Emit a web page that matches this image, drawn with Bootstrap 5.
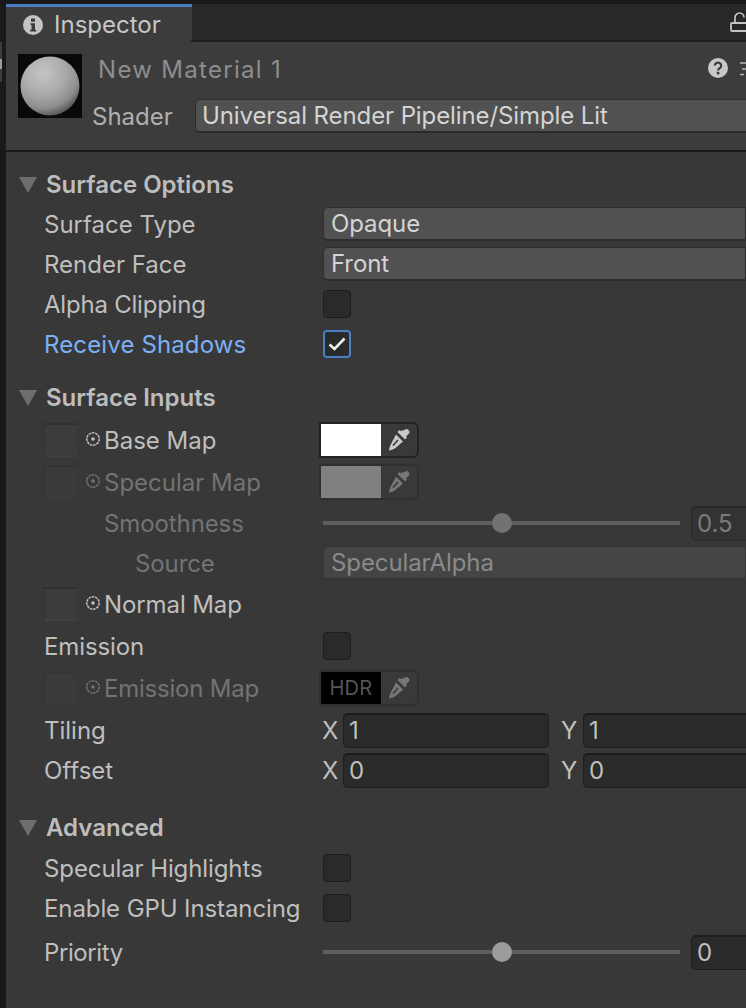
<!DOCTYPE html>
<html lang="en"><head><meta charset="utf-8"><title>Inspector</title>
<link href="https://cdn.jsdelivr.net/npm/bootstrap@5.3.0/dist/css/bootstrap.min.css" rel="stylesheet">
<style>
html,body{margin:0;height:1008px;overflow:hidden;background:#191919}
body{font-family:Inter,"Liberation Sans",sans-serif;font-size:24px;color:#bfbfbf;line-height:1}
.ins-shell{width:746px;height:1008px;padding:4px 0 0 6px;overflow:hidden;position:relative}
.ins-sliver{position:absolute;left:0;top:42px;width:2px;height:40px;background:#3c3c3c}
.ins-sliver i{position:absolute;left:0;top:17px;width:2px;height:10px;background:#a0a0a0}
.ins-tabbar{height:38px;background:#282828;border-bottom:2px solid #1f1f1f}
.ins-tab{width:186px;height:38px;background:#3c3c3c;border-top:3px solid #4a7ec4;border-bottom-right-radius:4px;gap:11px;padding-left:17px;color:#c6c6c6}
.ins-lock{margin-top:8px}
.ins-head{height:110px;background:#3c3c3c;border-bottom:2px solid #1a1a1a;padding:12px 0 0 12px;position:relative}
.ins-thumb{width:64px;height:64px;background:#090909;flex:none}
.ins-namecol{padding-left:10px}
.ins-name{height:32px;padding:0 0 0 7px;color:#8e8e8e;letter-spacing:1.3px;width:600px;margin-left:-1px}
.ins-shader{height:36px;margin-top:12px;width:700px}
.ins-lab2{width:103px;color:#b0b0b0;padding-top:2px}
.ins-drop{background:#515151;border:1px solid #2e2e2e;border-bottom:2px solid #2a2a2a;border-radius:5px 0 0 5px;height:34px;padding-left:7px;color:#d4d4d4;flex:1;white-space:nowrap;letter-spacing:-.1px}
.ins-shader .ins-drop{padding-left:6px}
.ins-help{position:absolute;left:702px;top:16px}
.ins-more{position:absolute;left:734px;top:20px}
.ins-body{background:#383838;height:856px;padding-top:13px;overflow:hidden}
.ins-sec{height:39px;padding-left:13px;font-weight:600;color:#bdbdbd;gap:9px}
.ins-tri{width:0;height:0;border-left:9px solid transparent;border-right:9px solid transparent;border-top:16px solid #6e6e6e;flex:none}
.ins-row{height:40px;padding-left:38px;white-space:nowrap}
.ins-tall{height:42px;padding-left:38px;white-space:nowrap}
.ins-prio{height:44px;padding-left:38px;white-space:nowrap;margin-top:2px}
.ins-lab,.ins-maplab,.ins-xy,.ins-ylab{padding-top:2px}
.ins-lab{width:279px;flex:none}
.ins-blue{color:#7cb0f4;letter-spacing:.13px}
.ins-off{color:#737373}
.ins-t1{letter-spacing:-.1px}.ins-t2{letter-spacing:-.22px}.ins-t3{letter-spacing:-.4px}
.ins-gap1{margin-top:14px;margin-bottom:2px}.ins-gap2{margin-top:18px}.ins-gap3{margin-top:1px}
.ins-check{width:28px;height:28px;background:#2a2a2a;border:1px solid #1c1c1c;border-radius:4px;flex:none}
.ins-check.on{border:2px solid #4a80c4}
.ins-slot{width:34px;height:34px;background:#3c3c3c;border-top:2px solid #303030;border-left:2px solid #353535;border-bottom:2px solid #404040;margin-left:-1px;flex:none}
.ins-slot.dim{background:#3a3a3a;border-color:#343434 #343434 #3b3b3b}
.ins-dot{width:16px;flex:none;margin:0 3px 3px 8px}
.ins-maplab{width:219px;flex:none}
.ins-color{width:100px;height:36px;background:#393939;border:2px solid #222;border-radius:0 6px 6px 0;margin-left:-4px;flex:none}
.ins-color.dim{background:#393939;border-color:#303030}
.ins-swatch{width:60px;height:32px;flex:none;font-size:20px;letter-spacing:.3px}
.ins-swatch-gray{background:#808080}
.ins-hdr{color:#555}
.ins-pick{flex:1;text-align:center;line-height:0}
.ins-inner{padding-left:98px}
.ins-inner2{padding-left:129px}
.ins-lab-a{width:219px;letter-spacing:-.1px}.ins-lab-b{width:188px;letter-spacing:-.1px}.ins-lab-c{width:278px}
.ins-track{width:357px;height:4px;background:#5e5e5e;position:relative;flex:none}
.ins-knob{position:absolute;left:169px;top:-8px;width:20px;height:20px;border-radius:50%;background:#9c9c9c}
.ins-track.dim .ins-knob{background:#727272}
.ins-num{background:#2a2a2a;border:1px solid #1e1e1e;border-top:2px solid #1c1c1c;border-radius:5px 0 0 5px;height:35px;padding-left:5px;flex:none}
.ins-valnum{margin-left:11px;width:80px}
.ins-num.ins-numdim{background:#333;border-color:#2a2a2a;color:#7c7c7c}
.ins-xy{width:21px;flex:none}
.ins-field{width:206px;border-radius:5px}
.ins-ylab{width:22px;margin-left:12px;flex:none}
.ins-wide{width:300px}
.ins-dim-drop{background:#454545;border-color:#353535;color:#8a8a8a}
.ins-advsec{height:40px}
</style></head>
<body>
<svg width="0" height="0" class="d-block position-absolute"><defs>
<symbol id="dropper" viewBox="0 0 22 22"><path d="M16.5 1a2.6 2.6 0 0 1 4 4L18 7.5l1 1-2 2L9.500 3l2-2 1 1zM8 5.500l7 7L7.500 19C5.500 20.600 2.500 21.500 1 21.500c0-2 1-4.500 2-6.500z" fill="currentColor"/><path d="M5 16.500l5-5.500" stroke="#393939" stroke-width="1.600"/></symbol>
<symbol id="ring" viewBox="0 0 16 16"><circle cx="8" cy="8" r="6.200" fill="none" stroke="currentColor" stroke-width="1.500" stroke-dasharray="2.600 .8"/><circle cx="8" cy="8" r="1.800" fill="currentColor"/></symbol>
<radialGradient id="ball" cx=".38" cy=".27" r=".82"><stop offset="0" stop-color="#c4c4c4"/><stop offset=".45" stop-color="#ababab"/><stop offset=".74" stop-color="#8e8e8e"/><stop offset=".88" stop-color="#626262"/><stop offset="1" stop-color="#404040"/></radialGradient>
</defs></svg>
<div class="ins-shell">
 <div class="ins-sliver"><i></i></div>
 <div class="ins-tabbar d-flex justify-content-between">
  <div class="ins-tab d-flex align-items-center">
   <svg width="20" height="20" viewBox="0 0 20 20"><circle cx="10" cy="10" r="10" fill="#c4c4c4"/><rect x="8" y="3.500" width="4" height="3.200" fill="#3c3c3c"/><path d="M7.500 8.200H12v6.500h1.200v1.800h-6v-1.800h1.300V10h-1z" fill="#3c3c3c"/></svg>
   <span>Inspector</span>
  </div>
  <svg class="ins-lock" width="16" height="20" viewBox="0 0 16 20"><path d="M5 11V5.500a4.500 4.500 0 0 1 9 0" fill="none" stroke="#c4c4c4" stroke-width="1.700"/><rect x="1" y="11" width="16" height="8" rx="1" fill="none" stroke="#c4c4c4" stroke-width="1.800"/></svg>
 </div>
 <div class="ins-head d-flex">
  <svg class="ins-thumb" viewBox="0 0 64 64"><circle cx="32" cy="32" r="29.500" fill="url(#ball)"/></svg>
  <div class="ins-namecol flex-grow-1">
   <div class="ins-name d-flex align-items-center">New Material 1</div>
   <div class="ins-shader d-flex align-items-center"><div class="ins-lab2">Shader</div><div class="ins-drop d-flex align-items-center">Universal Render Pipeline/Simple Lit</div></div>
  </div>
  <svg class="ins-help" width="20" height="20" viewBox="0 0 20 20"><circle cx="10" cy="10" r="10" fill="#c8c8c8"/><path d="M6.800 7.600a3.200 3 0 1 1 4.800 2.600c-1 .6-1.500 1-1.500 2.200" fill="none" stroke="#3c3c3c" stroke-width="2.200"/><rect x="8.800" y="13.800" width="2.600" height="2.600" fill="#3c3c3c"/></svg>
  <svg class="ins-more" width="6" height="14" viewBox="0 0 6 14"><path d="M0 1h6M0 12.500h4M2 7h4" stroke="#b8b8b8" stroke-width="1.600"/></svg>
 </div>
 <div class="ins-body">
  <div class="ins-sec d-flex align-items-center"><i class="ins-tri"></i>Surface Options</div>
  <div class="ins-row d-flex align-items-center"><div class="ins-lab">Surface Type</div><div class="ins-drop d-flex align-items-center">Opaque</div></div>
  <div class="ins-row d-flex align-items-center"><div class="ins-lab">Render Face</div><div class="ins-drop d-flex align-items-center">Front</div></div>
  <div class="ins-row d-flex align-items-center"><div class="ins-lab ins-t2">Alpha Clipping</div><div class="ins-check"></div></div>
  <div class="ins-row d-flex align-items-center"><div class="ins-lab ins-blue">Receive Shadows</div><div class="ins-check on d-flex align-items-center justify-content-center"><svg width="18" height="14" viewBox="0 0 18 14"><path d="M1.500 7.500l5 4.500L16.500 1.500" fill="none" stroke="#eee" stroke-width="2.600"/></svg></div></div>

  <div class="ins-sec ins-gap1 d-flex align-items-center"><i class="ins-tri"></i>Surface Inputs</div>
  <div class="ins-tall d-flex align-items-center">
   <div class="ins-slot"></div><svg class="ins-dot" height="16" style="color:#c0c0c0"><use href="#ring"/></svg>
   <div class="ins-maplab">Base Map</div>
   <div class="ins-color d-flex align-items-center"><div class="ins-swatch bg-white"></div><div class="ins-pick"><svg width="22" height="22" style="color:#c8c8c8"><use href="#dropper"/></svg></div></div>
  </div>
  <div class="ins-tall d-flex align-items-center ins-off">
   <div class="ins-slot dim"></div><svg class="ins-dot" height="16" style="color:#737373"><use href="#ring"/></svg>
   <div class="ins-maplab">Specular Map</div>
   <div class="ins-color dim d-flex align-items-center"><div class="ins-swatch ins-swatch-gray"></div><div class="ins-pick"><svg width="22" height="22" style="color:#777"><use href="#dropper"/></svg></div></div>
  </div>
  <div class="ins-row d-flex align-items-center ins-off ins-inner"><div class="ins-lab ins-lab-a">Smoothness</div><div class="ins-track dim"><div class="ins-knob"></div></div><div class="ins-num ins-numdim ins-valnum d-flex align-items-center">0.5</div></div>
  <div class="ins-row d-flex align-items-center ins-off ins-inner2"><div class="ins-lab ins-lab-b">Source</div><div class="ins-drop ins-dim-drop d-flex align-items-center">SpecularAlpha</div></div>
  <div class="ins-tall d-flex align-items-center">
   <div class="ins-slot"></div><svg class="ins-dot" height="16" style="color:#c0c0c0"><use href="#ring"/></svg>
   <div class="ins-maplab ins-t1">Normal Map</div>
  </div>
  <div class="ins-tall d-flex align-items-center"><div class="ins-lab ins-t1">Emission</div><div class="ins-check"></div></div>
  <div class="ins-tall d-flex align-items-center ins-off">
   <div class="ins-slot dim"></div><svg class="ins-dot" height="16" style="color:#737373"><use href="#ring"/></svg>
   <div class="ins-maplab ins-t2">Emission Map</div>
   <div class="ins-color dim d-flex align-items-center"><div class="ins-swatch ins-hdr bg-black d-flex align-items-center justify-content-center">HDR</div><div class="ins-pick"><svg width="22" height="22" style="color:#777"><use href="#dropper"/></svg></div></div>
  </div>
  <div class="ins-row ins-gap3 d-flex align-items-center"><div class="ins-lab ins-lab-c">Tiling</div><div class="ins-xy">X</div><div class="ins-num ins-field d-flex align-items-center">1</div><div class="ins-ylab">Y</div><div class="ins-num ins-wide d-flex align-items-center">1</div></div>
  <div class="ins-row d-flex align-items-center"><div class="ins-lab ins-lab-c">Offset</div><div class="ins-xy">X</div><div class="ins-num ins-field d-flex align-items-center">0</div><div class="ins-ylab">Y</div><div class="ins-num ins-wide d-flex align-items-center">0</div></div>

  <div class="ins-sec ins-advsec ins-gap2 d-flex align-items-center"><i class="ins-tri"></i>Advanced</div>
  <div class="ins-row d-flex align-items-center"><div class="ins-lab ins-t1">Specular Highlights</div><div class="ins-check"></div></div>
  <div class="ins-row d-flex align-items-center"><div class="ins-lab ins-t1">Enable GPU Instancing</div><div class="ins-check"></div></div>
  <div class="ins-prio d-flex align-items-center"><div class="ins-lab ins-t3">Priority</div><div class="ins-track"><div class="ins-knob"></div></div><div class="ins-num ins-valnum d-flex align-items-center">0</div></div>
 </div>
</div>
</body></html>
